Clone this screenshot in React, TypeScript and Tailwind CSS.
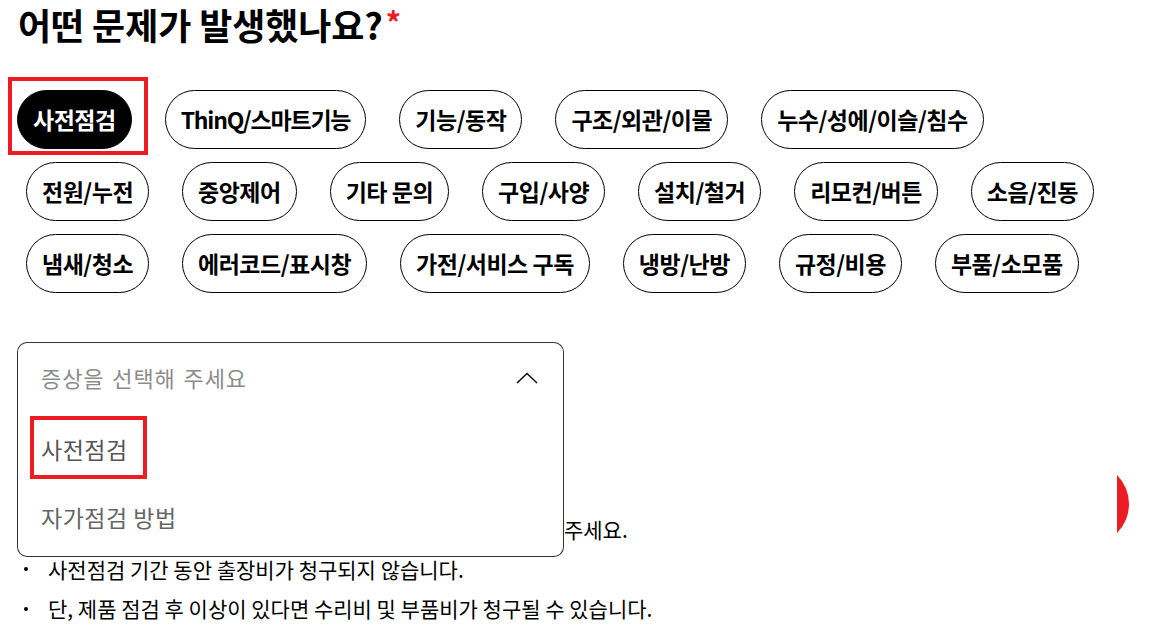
import React from 'react';

const rows: string[][] = [
  ['사전점검', 'ThinQ/스마트기능', '기능/동작', '구조/외관/이물', '누수/성에/이슬/침수'],
  ['전원/누전', '중앙제어', '기타 문의', '구입/사양', '설치/철거', '리모컨/버튼', '소음/진동'],
  ['냄새/청소', '에러코드/표시창', '가전/서비스 구독', '냉방/난방', '규정/비용', '부품/소모품'],
];

const notes = [
  '사전점검을 원하시는 경우 증상 항목에서 사전점검을 선택해 주세요.',
  '사전점검 기간 동안 출장비가 청구되지 않습니다.',
  '단, 제품 점검 후 이상이 있다면 수리비 및 부품비가 청구될 수 있습니다.',
];

const Chip: React.FC<{ label: string; selected?: boolean }> = ({ label, selected }) => {
  const tracking = label.startsWith('ThinQ') ? 'tracking-[-1.2px]' : 'tracking-[-0.5px]';
  return (
    <button
      type="button"
      className={
        (selected ? 'bg-black text-white ' : 'bg-white text-black ') +
        'h-[59px] shrink-0 rounded-full border border-black px-[15px] text-[23px] font-semibold ' +
        tracking
      }
    >
      {label}
    </button>
  );
};

const App: React.FC = () => {
  return (
    <div className="relative h-[636px] w-[1152px] overflow-hidden bg-white font-['Noto_Sans_CJK_KR',sans-serif] text-black">
      <h2 className="pl-[18px] pt-[2px] text-[36px] font-bold leading-[44px] tracking-[-0.1px]">
        어떤 문제가 발생했나요?
        <span className="relative -top-[6px] ml-[3px] text-[30px] font-bold leading-[30px] text-[#ec1c24]">*</span>
      </h2>

      {/* symptom category chips */}
      <div className="mt-[44px] flex flex-col gap-[13px]">
        {rows.map((row, i) => (
          <div key={i} className={i === 0 ? 'flex gap-[33px] pl-[17px]' : 'flex gap-[33px] pl-[26px]'}>
            {row.map((label, j) =>
              i === 0 && j === 0 ? (
                <div key={label} className="relative">
                  <Chip label={label} selected />
                  <div className="pointer-events-none absolute left-[-9px] top-[-13px] h-[78px] w-[140px] border-4 border-[#ed1c24]" />
                </div>
              ) : (
                <Chip key={label} label={label} />
              )
            )}
          </div>
        ))}
      </div>

      {/* symptom select + notes */}
      <div className="relative mt-[49px] pl-[17px]">
        <div className="relative w-[547px]">
          <div className="flex h-[70px] items-center justify-between rounded-t-[10px] border border-b-0 border-[#333] pl-[23px] pr-[25px]">
            <span className="text-[22px] tracking-[0.9px] text-[#8c8c8c] [word-spacing:2px]">증상을 선택해 주세요</span>
            <svg width="22" height="12" viewBox="0 0 22 12" fill="none" stroke="#111" strokeWidth="1.6">
              <polyline points="1,11 11,1.5 21,11" />
            </svg>
          </div>
          <ul className="absolute left-0 top-full z-10 h-[145px] w-full rounded-b-[10px] border border-t-0 border-[#333] bg-white">
            <li className="flex h-[75px] items-center pl-[23px]">
              <span className="relative text-[23px] tracking-[0.5px] text-[#555]">
                사전점검
                <span className="pointer-events-none absolute -bottom-[12px] -left-[11px] -right-[19px] -top-[16px] border-4 border-[#ed1c24]" />
              </span>
            </li>
            <li className="flex h-[60px] items-center pl-[23px] text-[23px] tracking-[0.5px] text-[#666]">자가점검 방법</li>
          </ul>
        </div>

        <ul className="mt-[98px] flex flex-col pl-[7px]">
          {notes.map((n) => (
            <li key={n} className="flex h-[39.5px] items-center text-[21px] tracking-[0px]">
              <span className="mr-[20px] h-[4px] w-[4px] shrink-0 rounded-full bg-black" />
              {n}
            </li>
          ))}
        </ul>
      </div>

      {/* floating red button, mostly hidden */}
      <div className="absolute left-[1117px] top-[475px] h-[58px] w-[12px] overflow-hidden">
        <div className="absolute left-[-70px] top-[-12px] h-[82px] w-[82px] rounded-full bg-[#ed1c24]" />
      </div>
    </div>
  );
};

export default App;
